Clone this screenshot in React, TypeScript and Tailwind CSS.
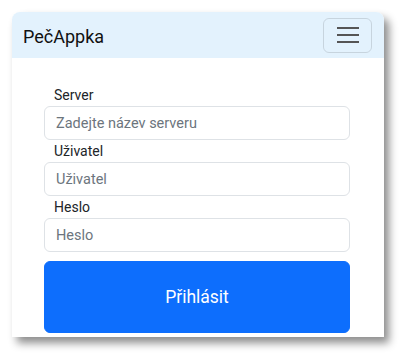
export default function App() {
  const fields = [
    { label: 'Server', placeholder: 'Zadejte název serveru' },
    { label: 'Uživatel', placeholder: 'Uživatel' },
    { label: 'Heslo', placeholder: 'Heslo', type: 'password' },
  ];

  return (
    <div
      className="h-[358px] w-[405px] overflow-hidden bg-white pl-[12px] pt-[12px]"
      style={{ fontFamily: 'Roboto, "Noto Sans", sans-serif' }}
    >
      <div className="flex h-[325px] w-[372px] flex-col overflow-hidden rounded-t-lg bg-white shadow-[5px_6px_9px_rgba(0,0,0,0.45)]">
        {/* navbar */}
        <nav className="flex h-[46px] shrink-0 items-center justify-between bg-[#e3f2fd] pl-[11px] pr-[12px]">
          <span className="pt-[3px] text-[18px] leading-none text-[#111]">PečAppka</span>
          <button className="flex h-[35px] w-[49px] flex-col items-center justify-center gap-[5px] rounded-md border border-[rgba(0,0,0,0.12)]">
            <span className="block h-[2px] w-[22px] bg-[#555]" />
            <span className="block h-[2px] w-[22px] bg-[#555]" />
            <span className="block h-[2px] w-[22px] bg-[#555]" />
          </button>
        </nav>

        {/* login form */}
        <form className="flex flex-col pl-[32px] pr-[34px] pt-[26px]">
          {fields.map((f) => (
            <div key={f.label} className="flex flex-col">
              <label className="ml-[10px] h-[22px] text-[14px] leading-[22px] text-[#212529]">
                {f.label}
              </label>
              <input
                type={f.type ?? 'text'}
                placeholder={f.placeholder}
                className="h-[34px] w-full rounded-md border border-[#dee2e6] px-[11px] text-[14.5px] text-[#212529] outline-none placeholder:text-[#6c757d]"
              />
            </div>
          ))}
          <button
            type="button"
            className="mt-[9px] h-[72px] w-full rounded-md border border-[#0d6efd] bg-[#0d6efd] text-[17.5px] text-white"
          >
            Přihlásit
          </button>
        </form>
      </div>
    </div>
  );
}
